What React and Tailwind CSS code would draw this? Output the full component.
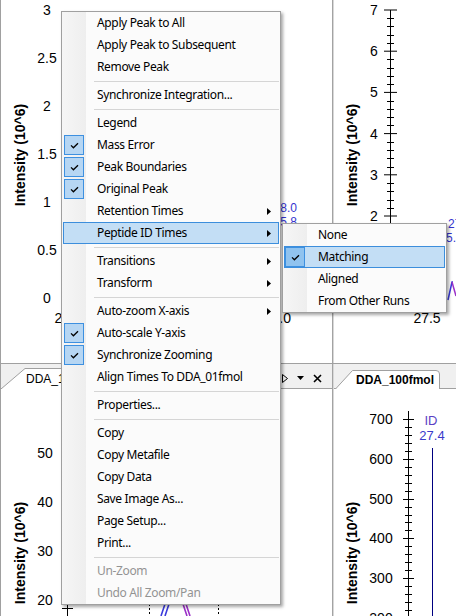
import React from "react";

function Check() {
  return (
    <svg width="9" height="7" viewBox="0 0 9 7">
      <path d="M1 3.4 L3.4 5.8 L8 1.2" fill="none" stroke="#000" strokeWidth="1.3" />
    </svg>
  );
}

function Arrow() {
  return (
    <svg width="4" height="7" viewBox="0 0 4 7">
      <path d="M0 0 L4 3.5 L0 7Z" fill="#000" />
    </svg>
  );
}

function Row({ label, checked, arrow, hl, disabled }) {
  return (
    <div
      className={`flex items-center h-[22px] border ${
        hl ? "bg-[#c3def5] border-[#3c8edc]" : "border-transparent"
      }`}
    >
      <div className="w-[33px] h-full flex items-center">
        {checked && (
          <div
            className={`w-[20px] h-[20px] border border-[#3d90e0] flex items-center justify-center ${
              hl ? "bg-[#90c3ef]" : "bg-[#b6d6f3]"
            }`}
          >
            <Check />
          </div>
        )}
      </div>
      <span
        className={`flex-1 whitespace-nowrap leading-none tracking-[-0.35px] ${
          disabled ? "text-[#939393]" : "text-black"
        }`}
      >
        {label}
      </span>
      {arrow && (
        <div className="mr-[7px] flex items-center">
          <Arrow />
        </div>
      )}
    </div>
  );
}

function Sep() {
  return (
    <div className="h-[6px] flex items-center pl-[31px]">
      <div className="h-px flex-1 bg-[#d5d5d5]" />
    </div>
  );
}

const MAIN = [
  { label: "Apply Peak to All" },
  { label: "Apply Peak to Subsequent" },
  { label: "Remove Peak" },
  { sep: true },
  { label: "Synchronize Integration..." },
  { sep: true },
  { label: "Legend" },
  { label: "Mass Error", checked: true },
  { label: "Peak Boundaries", checked: true },
  { label: "Original Peak", checked: true },
  { label: "Retention Times", arrow: true },
  { label: "Peptide ID Times", arrow: true, hl: true },
  { sep: true },
  { label: "Transitions", arrow: true },
  { label: "Transform", arrow: true },
  { sep: true },
  { label: "Auto-zoom X-axis", arrow: true },
  { label: "Auto-scale Y-axis", checked: true },
  { label: "Synchronize Zooming", checked: true },
  { label: "Align Times To DDA_01fmol" },
  { sep: true },
  { label: "Properties..." },
  { sep: true },
  { label: "Copy" },
  { label: "Copy Metafile" },
  { label: "Copy Data" },
  { label: "Save Image As..." },
  { label: "Page Setup..." },
  { label: "Print..." },
  { sep: true },
  { label: "Un-Zoom", disabled: true },
  { label: "Undo All Zoom/Pan", disabled: true },
];

const SUB = [
  { label: "None" },
  { label: "Matching", checked: true, hl: true },
  { label: "Aligned" },
  { label: "From Other Runs" },
];

function Menu({ items, className }) {
  return (
    <div
      className={`absolute border border-[#a0a0a0] px-[1px] bg-[linear-gradient(to_right,#f6f6f6_0px,#eeeeee_24px,#fbfbfb_24px)] shadow-[2px_2px_3px_rgba(0,0,0,0.35)] font-['Noto_Sans',sans-serif] text-[12px] ${className}`}
    >
      {items.map((it, i) => (it.sep ? <Sep key={i} /> : <Row key={i} {...it} />))}
    </div>
  );
}

const BLUE = "#3434cf";

function TopLeft() {
  const labels = ["3", "2.5", "2", "1.5", "1", "0.5", "0"];
  return (
    <svg width="331" height="363" className="block">
      <g transform="translate(-1 0)" fontSize="14">
        {labels.map((l, i) => (
          <text key={l} x="47" y={10 + 48 * i + 5} textAnchor="middle" fill="#000">
            {l}
          </text>
        ))}
        <text transform="rotate(-90 20 155)" x="20" y="160" textAnchor="middle" fontWeight="bold" fill="#000">
          Intensity (10^6)
        </text>
        <text x="297" y="212" textAnchor="end" fontSize="12" fill={BLUE}>28.0</text>
        <text x="297" y="226" textAnchor="end" fontSize="12" fill={BLUE}>25.8</text>
        <text x="68" y="323" textAnchor="middle">27.5</text>
        <text x="291" y="323" textAnchor="end">28.0</text>
      </g>
    </svg>
  );
}

function TopRight() {
  const labels = ["7", "6", "5", "4", "3", "2", "1", "0"];
  const ticks = [];
  for (let i = 0; i < 7; i++) {
    const y0 = 10 + 41.2 * i;
    ticks.push(<line key={"M" + i} x1="384" x2="397" y1={y0} y2={y0} stroke="#000" />);
    for (let k = 1; k < 5; k++) {
      const y = Math.round(y0 + 8.24 * k) + 0.5;
      ticks.push(<line key={"m" + i + k} x1="387" x2="394" y1={y} y2={y} stroke="#000" />);
    }
  }
  return (
    <svg width="122" height="363" className="block">
      <g transform="translate(-334 0)" fontSize="14">
        {labels.map((l, i) => (
          <text key={l} x="374" y={10 + 41.2 * i + 5} textAnchor="middle" fill="#000">
            {l}
          </text>
        ))}
        <line x1="390.5" x2="390.5" y1="10" y2="306" stroke="#000" />
        {ticks}
        <text transform="rotate(-90 352 155)" x="352" y="160" textAnchor="middle" fontWeight="bold" fill="#000">
          Intensity (10^6)
        </text>
        <text x="448" y="228" fontSize="12" fill={BLUE}>27.2</text>
        <text x="446" y="242" fontSize="12" fill={BLUE}>5.8</text>
        <path d="M448 300 L452 282 L453 282" fill="none" stroke="#3b3bdc" strokeWidth="1.5" />
        <path d="M452 282 L456 296" fill="none" stroke="#9b30c8" strokeWidth="1.5" />
        <text x="427" y="323" textAnchor="middle">27.5</text>
      </g>
    </svg>
  );
}

function BottomLeft() {
  const labels = ["50", "40", "30", "20"];
  return (
    <svg width="331" height="227" className="block">
      <g transform="translate(-1 -389)" fontSize="14">
        {labels.map((l, i) => (
          <text key={l} x="45" y={453 + 49 * i + 5} textAnchor="middle" fill="#000">
            {l}
          </text>
        ))}
        <text transform="rotate(-90 20 553)" x="20" y="558" textAnchor="middle" fontWeight="bold" fill="#000">
          Intensity (10^6)
        </text>
        <line x1="67.5" x2="67.5" y1="603" y2="616" stroke="#000" />
        <line x1="62" x2="73" y1="608.5" y2="608.5" stroke="#000" />
        <line x1="149.5" x2="149.5" y1="600" y2="616" stroke="#000" strokeDasharray="2 2" />
        <line x1="218.5" x2="218.5" y1="600" y2="616" stroke="#000" strokeDasharray="2 2" />
        <path d="M161 616 L165 604 M165 616 L169 604" stroke="#3b3bdc" strokeWidth="1.6" fill="none" />
        <path d="M183 604 L187 616 M186 604 L190 616" stroke="#9b30c8" strokeWidth="1.6" fill="none" />
      </g>
    </svg>
  );
}

function BottomRight() {
  const labels = ["700", "600", "500", "400", "300", "200"];
  const ticks = [];
  for (let i = 0; i < 6; i++) {
    const y0 = Math.round(419 + 39.8 * i) + 0.5;
    ticks.push(<line key={"M" + i} x1="403" x2="414" y1={y0} y2={y0} stroke="#000" />);
    for (let k = 1; k < 5; k++) {
      const y = Math.round(419 + 39.8 * i + 7.96 * k) + 0.5;
      ticks.push(<line key={"m" + i + k} x1="405" x2="412" y1={y} y2={y} stroke="#000" />);
    }
  }
  return (
    <svg width="122" height="227" className="block">
      <g transform="translate(-334 -389)" fontSize="14">
        {labels.map((l, i) => (
          <text key={l} x="381" y={419 + 39.8 * i + 5} textAnchor="middle" fill="#000">
            {l}
          </text>
        ))}
        <line x1="408.5" x2="408.5" y1="411" y2="616" stroke="#000" />
        {ticks}
        <text transform="rotate(-90 352 553)" x="352" y="558" textAnchor="middle" fontWeight="bold" fill="#000">
          Intensity (10^6)
        </text>
        <text x="431" y="425" textAnchor="middle" fontSize="13" fill="#5a3fc4">ID</text>
        <text x="432" y="440" textAnchor="middle" fontSize="13" fill="#3a3acb">27.4</text>
        <line x1="432.5" x2="432.5" y1="448" y2="616" stroke="#000080" />
      </g>
    </svg>
  );
}

function Divider() {
  return <div className="w-[2px] shrink-0 bg-[#a3a3a3] border-r border-[#d8d8d8]" />;
}

export default function App() {
  return (
    <div className="relative w-[456px] h-[616px] overflow-hidden bg-white font-['Liberation_Sans',Arial,sans-serif]">
      <div className="flex flex-col h-full border-l border-[#a0a0a0]">
        <div className="flex h-[363px]">
          <div className="w-[331px] shrink-0">
            <TopLeft />
          </div>
          <Divider />
          <div className="flex-1">
            <TopRight />
          </div>
        </div>
        <div className="h-px bg-[#a0a0a0]" />
        <div className="flex h-[25px]">
          <div className="w-[331px] shrink-0 flex items-end bg-[#f0f0f0] border-b border-[#a0a0a0]">
            <div className="relative -mb-px h-[21px] w-[110px] pl-[25px] flex items-center">
              <svg className="absolute inset-0" width="110" height="21">
                <path d="M0 21 L24 0.5 H106 Q109.5 0.5 109.5 4 V21" fill="#fff" stroke="#a0a0a0" />
              </svg>
              <span className="relative text-[12px] text-black">DDA_10fmol</span>
            </div>
            <div className="ml-auto mr-[10px] h-[20px] flex items-center gap-[9px] self-end">
              <svg width="6" height="9" viewBox="0 0 6 9">
                <path d="M0.5 0.5 L5.5 4.5 L0.5 8.5Z" fill="none" stroke="#000" />
              </svg>
              <svg width="7" height="4" viewBox="0 0 7 4">
                <path d="M0 0 H7 L3.5 4Z" fill="#000" />
              </svg>
              <svg width="9" height="9" viewBox="0 0 9 9">
                <path d="M1 1 L8 8 M8 1 L1 8" stroke="#000" strokeWidth="1.6" />
              </svg>
            </div>
          </div>
          <Divider />
          <div className="flex-1 flex items-end bg-[#f0f0f0] border-b border-[#a0a0a0]">
            <div className="relative -mb-px ml-px h-[19px] w-[105px] pl-[21px] flex items-center">
              <svg className="absolute inset-0" width="105" height="19">
                <path d="M0.5 19 L17.5 0.5 H101 Q104.5 0.5 104.5 4 V19" fill="#fff" stroke="#a0a0a0" />
              </svg>
              <span className="relative text-[12px] font-bold text-black">DDA_100fmol</span>
            </div>
          </div>
        </div>
        <div className="flex flex-1">
          <div className="w-[331px] shrink-0">
            <BottomLeft />
          </div>
          <Divider />
          <div className="flex-1">
            <BottomRight />
          </div>
        </div>
      </div>
      <Menu items={MAIN} className="left-[61px] top-[11px] w-[220px]" />
      <Menu items={SUB} className="left-[282px] top-[223px] w-[165px]" />
    </div>
  );
}
